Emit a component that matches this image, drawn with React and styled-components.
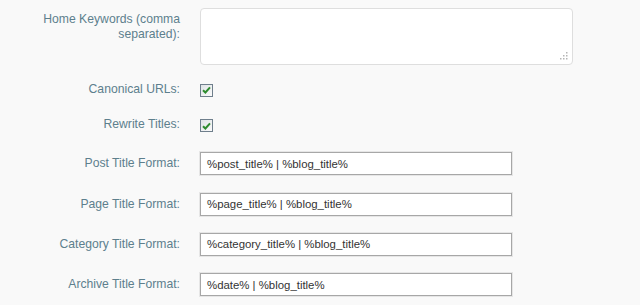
import React from 'react';
import styled, { createGlobalStyle } from 'styled-components';

const GlobalStyle = createGlobalStyle`
  html, body {
    margin: 0;
    padding: 0;
    background: #f9f9f9;
  }
  body {
    font-family: "Liberation Sans", Arial, sans-serif;
  }
`;

const Form = styled.div`
  display: flex;
  flex-direction: column;
  padding-top: 8px;
  width: 640px;
  height: 305px;
  box-sizing: border-box;
  overflow: hidden;
`;

const TitleGroup = styled.div`
  display: flex;
  flex-direction: column;
  padding-top: 1px;
`;

const Row = styled.div`
  display: grid;
  grid-template-columns: 180px 1fr;
  column-gap: 20px;
  align-items: ${(p) => (p.$top ? 'start' : 'center')};
  height: ${(p) => p.$h}px;
`;

const Label = styled.div`
  text-align: right;
  font-size: 12.2px;
  line-height: 15px;
  color: #5d7f8d;
  padding-top: ${(p) => p.$pt || 0}px;
`;

const TextArea = styled.div`
  position: relative;
  width: 373px;
  height: 57px;
  box-sizing: border-box;
  background: #fff;
  border: 1px solid #dedede;
  border-radius: 4px;
`;

const Grip = styled.svg`
  position: absolute;
  right: 4px;
  bottom: 4px;
`;

const CheckBox = styled.span`
  display: inline-flex;
  align-items: center;
  justify-content: center;
  width: 13px;
  height: 13px;
  box-sizing: border-box;
  border: 1px solid #6f7f8c;
  background: linear-gradient(135deg, #dfe3e6, #fbfbfb);
`;

const Input = styled.div`
  width: 312px;
  height: 23px;
  box-sizing: border-box;
  border: 1px solid #a7a7a7;
  box-shadow: 0 0 0 1px #e6e6e6;
  background: #fff;
  padding-left: 6px;
  display: flex;
  align-items: center;
  font-size: 11.4px;
  color: #333;
`;

const titleFields = [
  { label: 'Post Title Format:', value: '%post_title% | %blog_title%' },
  { label: 'Page Title Format:', value: '%page_title% | %blog_title%' },
  { label: 'Category Title Format:', value: '%category_title% | %blog_title%' },
  { label: 'Archive Title Format:', value: '%date% | %blog_title%' },
];

function Check() {
  return (
    <CheckBox>
      <svg width="9" height="8" viewBox="0 0 9 8">
        <path d="M1 4.2 L3.4 6.5 L8 1.3" fill="none" stroke="#2f8c2f" strokeWidth="2" />
      </svg>
    </CheckBox>
  );
}

export default function App() {
  return (
    <>
      <GlobalStyle />
      <Form>
        <Row $h={65} $top>
          <Label $pt={4}>
            Home Keywords (comma
            <br />
            separated):
          </Label>
          <TextArea>
            <Grip width="8" height="8" viewBox="0 0 8 8">
              <g fill="#b5b5b5">
                <rect x="6" y="0" width="1.5" height="1.5" />
                <rect x="3" y="3" width="1.5" height="1.5" />
                <rect x="6" y="3" width="1.5" height="1.5" />
                <rect x="0" y="6" width="1.5" height="1.5" />
                <rect x="3" y="6" width="1.5" height="1.5" />
                <rect x="6" y="6" width="1.5" height="1.5" />
              </g>
            </Grip>
          </TextArea>
        </Row>
        <Row $h={36}>
          <Label>Canonical URLs:</Label>
          <div><Check /></div>
        </Row>
        <Row $h={36}>
          <Label>Rewrite Titles:</Label>
          <div><Check /></div>
        </Row>
        <TitleGroup>
          {titleFields.map((f) => (
            <Row key={f.label} $h={40.4}>
              <Label>{f.label}</Label>
              <Input>{f.value}</Input>
            </Row>
          ))}
        </TitleGroup>
      </Form>
    </>
  );
}
